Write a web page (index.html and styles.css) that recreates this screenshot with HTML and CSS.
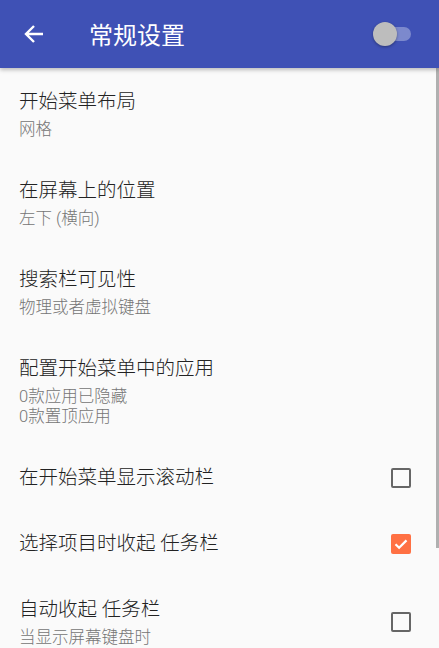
FILE: index.html
```html
<!DOCTYPE html>
<html lang="zh-CN">
<head>
    <meta charset="UTF-8">
    <meta name="viewport" content="width=device-width, initial-scale=1.0">
    <title>常规设置</title>
    <link rel="stylesheet" href="styles.css">
</head>
<body>
    <header class="barra">
        <svg class="voltar" width="20" height="20" viewBox="0 0 20 20">
            <path d="M19 10H2.5M10 2L2 10l8 8" fill="none" stroke="#fff" stroke-width="2.4"/>
        </svg>
        <h1 class="titulo">常规设置</h1>
        <div class="chave">
            <span class="trilho"></span>
            <span class="botao"></span>
        </div>
    </header>

    <main class="lista">
        <div class="item">
            <div class="textos">
                <p class="nome">开始菜单布局</p>
                <p class="desc">网格</p>
            </div>
        </div>
        <div class="item">
            <div class="textos">
                <p class="nome">在屏幕上的位置</p>
                <p class="desc">左下 (横向)</p>
            </div>
        </div>
        <div class="item">
            <div class="textos">
                <p class="nome">搜索栏可见性</p>
                <p class="desc">物理或者虚拟键盘</p>
            </div>
        </div>
        <div class="item">
            <div class="textos">
                <p class="nome">配置开始菜单中的应用</p>
                <p class="desc">0款应用已隐藏<br>0款置顶应用</p>
            </div>
        </div>
        <div class="item check">
            <div class="textos">
                <p class="nome">在开始菜单显示滚动栏</p>
            </div>
            <span class="caixa"></span>
        </div>
        <div class="item check">
            <div class="textos">
                <p class="nome">选择项目时收起 任务栏</p>
            </div>
            <span class="caixa marcada">
                <svg width="20" height="20" viewBox="0 0 20 20">
                    <path d="M4.5 10.2l3.6 3.6 7.4-7.4" fill="none" stroke="#fff" stroke-width="2.2"/>
                </svg>
            </span>
        </div>
        <div class="item check">
            <div class="textos">
                <p class="nome">自动收起 任务栏</p>
                <p class="desc">当显示屏幕键盘时</p>
            </div>
            <span class="caixa"></span>
        </div>
        <div class="rolagem"></div>
    </main>
</body>
</html>
```

FILE: styles.css
```css
*{
    margin: 0px;
    padding: 0px;
    box-sizing: border-box;
}
body{
    width: 439px;
    height: 648px;
    overflow: hidden;
    background-color: #fafafa;
    font-family: Roboto, "Noto Sans CJK SC", sans-serif;
    font-weight: 300;
}
.barra{
    height: 68px;
    background-color: #3f51b5;
    display: flex;
    align-items: center;
    padding: 0px 24px;
    position: relative;
    z-index: 2;
    box-shadow: 0px 2px 4px rgba(0,0,0,0.25);
}
.voltar{
    flex-shrink: 0;
}
.titulo{
    color: #fff;
    font-size: 24px;
    font-weight: normal;
    margin-left: 45px;
    margin-top: -2px;
    flex: 1;
}
.chave{
    position: relative;
    width: 40px;
    height: 26px;
    margin-right: 2px;
}
.trilho{
    position: absolute;
    left: 4px;
    top: 6px;
    width: 34px;
    height: 14px;
    border-radius: 7px;
    background-color: rgba(255,255,255,0.32);
}
.botao{
    position: absolute;
    left: 0px;
    top: 1px;
    width: 24px;
    height: 24px;
    border-radius: 50%;
    background-color: #bdbdbd;
    box-shadow: 0px 1px 3px rgba(0,0,0,0.35);
}
.lista{
    position: relative;
}
.item{
    display: flex;
    align-items: center;
    padding: 20px 28px 17px 19px;
}
.item.check{
    min-height: 66px;
    padding-bottom: 18px;
}
.textos{
    flex: 1;
}
.nome{
    font-size: 19.5px;
    line-height: 28px;
    color: #222;
}
.desc{
    font-size: 16.5px;
    line-height: 20px;
    color: #757575;
    margin-top: 4px;
}
.caixa{
    width: 20px;
    height: 20px;
    border: 2px solid #666;
    border-radius: 2px;
    flex-shrink: 0;
}
.caixa.marcada{
    border: none;
    background-color: #ff7043;
}
.caixa svg{
    display: block;
}
.rolagem{
    position: absolute;
    right: 0px;
    top: 0px;
    width: 3px;
    height: 480px;
    background-color: #b0b0b0;
}
```
